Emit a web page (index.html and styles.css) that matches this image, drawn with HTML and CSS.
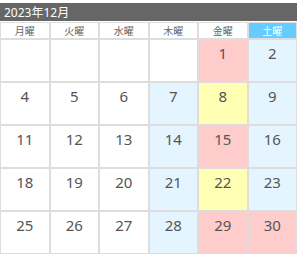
FILE: index.html
```html
<!DOCTYPE html>
<html lang="ja">
<head>
<meta charset="utf-8">
<link rel="stylesheet" href="styles.css">
</head>
<body>
<div class="cal">
  <div class="title">2023年12月</div>
  <table class="grid">
    <thead>
      <tr>
        <th>月曜</th><th>火曜</th><th>水曜</th><th>木曜</th><th>金曜</th><th class="sat">土曜</th>
      </tr>
    </thead>
    <tbody>
      <tr><td></td><td></td><td></td><td></td><td class="pink">1</td><td class="blue">2</td></tr>
      <tr><td>4</td><td>5</td><td>6</td><td class="blue">7</td><td class="yellow">8</td><td class="blue">9</td></tr>
      <tr><td>11</td><td>12</td><td>13</td><td class="blue">14</td><td class="pink">15</td><td class="blue">16</td></tr>
      <tr><td>18</td><td>19</td><td>20</td><td class="blue">21</td><td class="yellow">22</td><td class="blue">23</td></tr>
      <tr><td>25</td><td>26</td><td>27</td><td class="blue">28</td><td class="pink">29</td><td class="pink">30</td></tr>
    </tbody>
  </table>
</div>
</body>
</html>
```
FILE: styles.css
```css
html, body {
  margin: 0;
  padding: 0;
  background: #fff;
}
.cal {
  padding-top: 3px;
  width: 297px;
  font-family: "Noto Sans", "Noto Sans CJK JP", sans-serif;
}
.title {
  height: 18px;
  background: #666;
  color: #fff;
  font-size: 12px;
  line-height: 19px;
  padding-left: 4px;
  margin-bottom: 1px;
}
.grid {
  width: 297px;
  border-collapse: separate;
  border-spacing: 0;
  table-layout: fixed;
}
.grid th, .grid td {
  border: 1px solid #ddd;
  text-align: center;
}
.grid th {
  height: 17px;
  box-sizing: border-box;
  padding: 0;
  font-size: 10px;
  line-height: 15px;
  font-weight: normal;
  color: #666;
  font-family: "Noto Sans CJK JP", sans-serif;
}
.grid th.sat {
  background: #66ccff;
  color: #fff;
}
.grid td {
  height: 43px;
  padding: 3px 0 0;
  box-sizing: border-box;
  vertical-align: top;
  font-family: "Noto Sans", sans-serif;
  font-weight: normal;
  font-size: 15px;
  line-height: 20px;
  color: #555;
}
.pink { background: #ffcccc; }
.blue { background: #e5f5ff; }
.yellow { background: #ffffb3; }
```
